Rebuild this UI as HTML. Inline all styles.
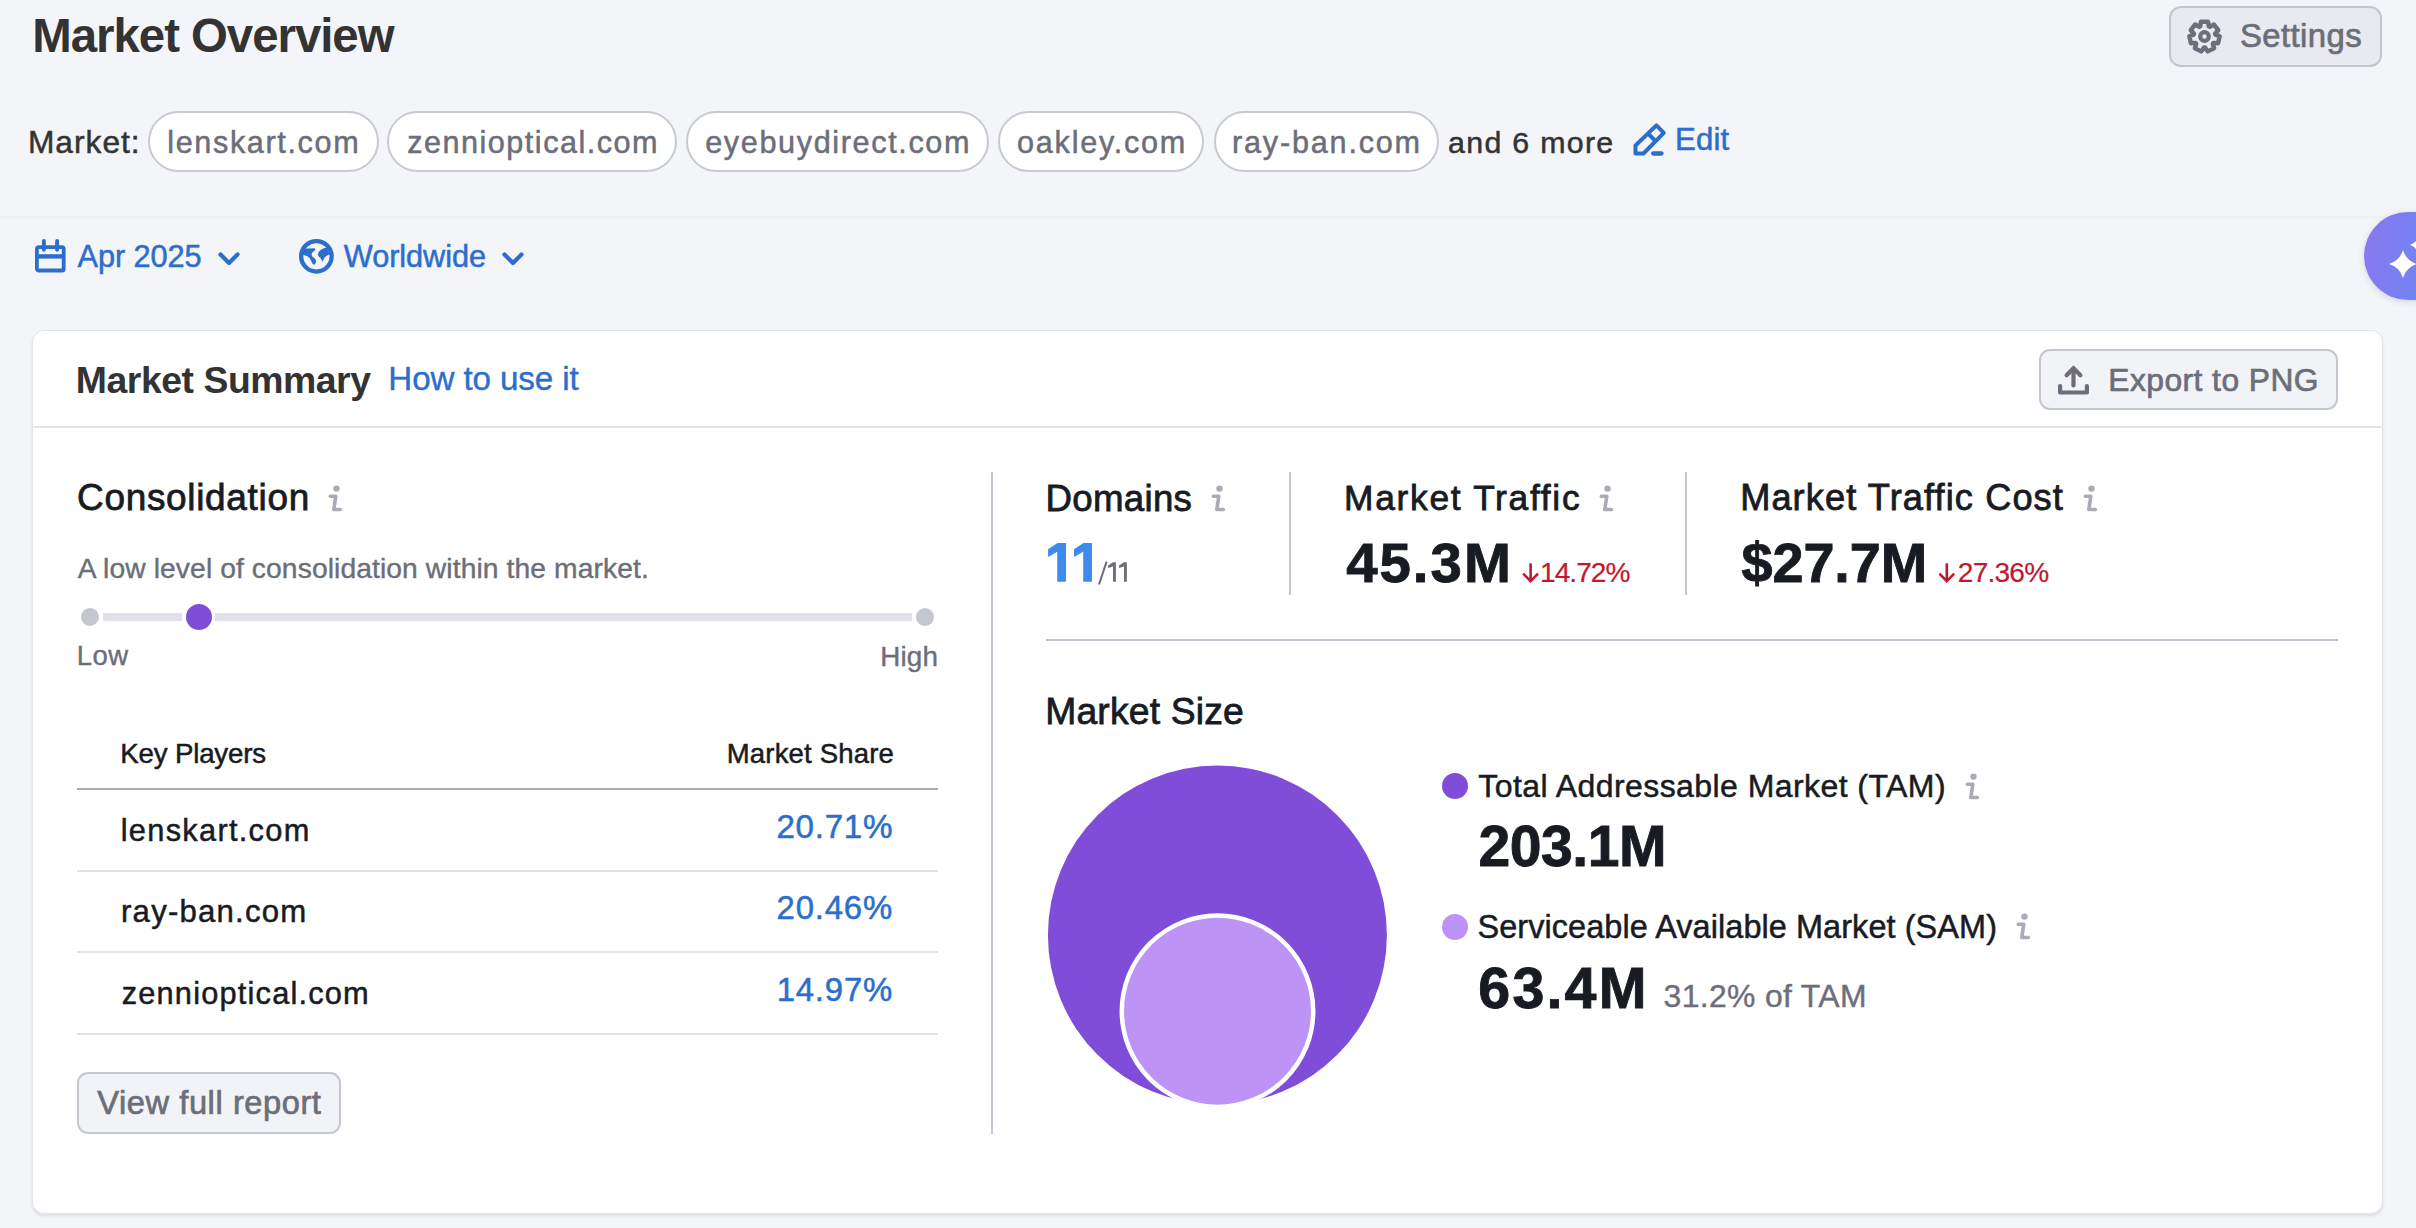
<!DOCTYPE html>
<html><head><meta charset="utf-8">
<style>
html,body{margin:0;padding:0}
body{width:2416px;height:1228px;overflow:hidden;position:relative;background:#f4f5f9;font-family:"Liberation Sans",sans-serif}
.a{position:absolute;box-sizing:border-box}
.t{position:absolute;line-height:0;white-space:nowrap;font-family:"Liberation Sans",sans-serif}
.chip{position:absolute;box-sizing:border-box;top:111px;height:61px;border:2px solid #c8cad2;border-radius:31px;background:#fff}
.btn{position:absolute;box-sizing:border-box;border:2px solid #c4c7cf;border-radius:12px;background:#f2f3f6}
.ln{position:absolute}
svg{position:absolute;overflow:visible}
@media (max-width:1600px){html{zoom:0.5}}
</style></head><body>
<!-- divider under header area -->
<div class="ln" style="left:0;top:216px;width:2416px;height:2px;background:#eef0f4"></div>

<!-- Settings button -->
<div class="btn" style="left:2169px;top:6px;width:213px;height:61px;background:#e9eaef;border-color:#c4c6cd"></div>
<svg style="left:2187px;top:19px" width="35" height="35" viewBox="-17.5 -17.5 35 35">
 <path d="M-4.28 -10.13 L-3.61 -14.76 L3.61 -14.76 L4.28 -10.13 L5.25 -9.67 L9.29 -12.03 L13.80 -6.38 L10.59 -2.97 L10.83 -1.92 L15.20 -0.24 L13.59 6.81 L8.92 6.43 L8.26 7.27 L9.66 11.73 L3.15 14.87 L0.54 10.99 L-0.54 10.99 L-3.15 14.87 L-9.66 11.73 L-8.26 7.27 L-8.92 6.43 L-13.59 6.81 L-15.20 -0.24 L-10.83 -1.92 L-10.59 -2.97 L-13.80 -6.38 L-9.29 -12.03 L-5.25 -9.67Z" fill="none" stroke="#6c6e79" stroke-width="4.4" stroke-linejoin="round"/>
 <circle cx="0" cy="0" r="4.3" fill="none" stroke="#6c6e79" stroke-width="4.2"/>
</svg>

<!-- chips -->
<div class="chip" style="left:148px;width:231px"></div>
<div class="chip" style="left:387px;width:290px"></div>
<div class="chip" style="left:686px;width:303px"></div>
<div class="chip" style="left:998px;width:206px"></div>
<div class="chip" style="left:1214px;width:225px"></div>

<!-- edit pencil -->
<svg style="left:1632px;top:123px" width="34" height="33" viewBox="0 0 34 33">
 <path d="M3.5 30.5 L3.5 22.5 L24.4 2.4 L31.8 9.8 L11.5 30.5 Z" fill="none" stroke="#2c6ecb" stroke-width="4" stroke-linejoin="round"/>
 <path d="M16 10.5 L23.6 18.1" stroke="#2c6ecb" stroke-width="4"/>
 <path d="M21.2 30.5 L29.5 30.5" stroke="#2c6ecb" stroke-width="4.3" stroke-linecap="round"/>
</svg>

<!-- calendar -->
<svg style="left:35px;top:239px" width="31" height="33" viewBox="0 0 31 33">
 <rect x="1.9" y="8.2" width="26.8" height="23.3" rx="1.6" fill="none" stroke="#2c6ecb" stroke-width="3.8"/>
 <rect x="2" y="15.2" width="27" height="4.4" fill="#2c6ecb"/>
 <path d="M8.9 1.9 L8.9 10.8 M22.1 1.9 L22.1 10.8" stroke="#2c6ecb" stroke-width="3.9" stroke-linecap="round"/>
</svg>
<svg style="left:218px;top:252px" width="22" height="14" viewBox="0 0 22 14">
 <path d="M2.5 2.5 L11 11 L19.5 2.5" fill="none" stroke="#2c6ecb" stroke-width="4.2" stroke-linecap="round" stroke-linejoin="round"/>
</svg>
<!-- globe -->
<svg style="left:294px;top:234px" width="46" height="46" viewBox="0 0 46 46">
 <circle cx="22.4" cy="22.3" r="15.25" fill="none" stroke="#2c6ecb" stroke-width="4.3"/>
 <path d="M8 14.8 L20.5 14.2 Q21.8 15 20.6 16.6 Q17 19 17.6 21 Q18 23 20.5 24.3 Q22.6 26 21.8 28.6 Q21 31 19.5 30.8 Q18 30 17 26.5 Q16 23.5 13 22 Q10 21 8 21 Z" fill="#2c6ecb"/>
 <path d="M33 13.3 Q29 14.3 26.5 16 Q23.5 18.5 24 21 Q24.5 23 26.5 24 Q27.5 25.5 28.3 27.8 Q29.5 26 30.5 23.5 Q32 21.5 36 20.3 Z" fill="#2c6ecb"/>
</svg>
<svg style="left:502px;top:252px" width="22" height="14" viewBox="0 0 22 14">
 <path d="M2.5 2.5 L11 11 L19.5 2.5" fill="none" stroke="#2c6ecb" stroke-width="4.2" stroke-linecap="round" stroke-linejoin="round"/>
</svg>

<!-- AI button -->
<div class="a" style="left:2364px;top:212px;width:120px;height:88px;border-radius:44px;background:linear-gradient(100deg,#8a78f0 0%,#6e86f2 60%,#5f8ff2 100%);box-shadow:0 2px 6px rgba(60,60,120,0.18)"></div>
<svg style="left:2387.6px;top:248.7px" width="30" height="30" viewBox="-15 -15 30 30">
 <path d="M0 -14 Q3.2 -3.2 14 0 Q3.2 3.2 0 14 Q-3.2 3.2 -14 0 Q-3.2 -3.2 0 -14Z" fill="#fff"/>
</svg>
<svg style="left:2410px;top:237px" width="16" height="16" viewBox="-8 -8 16 16">
 <path d="M0 -8 Q1.8 -1.8 8 0 Q1.8 1.8 0 8 Q-1.8 1.8 -8 0 Q-1.8 -1.8 0 -8Z" fill="#fff"/>
</svg>

<!-- card -->
<div class="a" style="left:32px;top:330px;width:2351px;height:884px;background:#fff;border:1px solid #e3e4ea;border-radius:12px;box-shadow:0 2px 3px rgba(25,27,35,0.10)"></div>
<div class="ln" style="left:33px;top:426px;width:2349px;height:2px;background:#e3e4ea"></div>

<!-- export button -->
<div class="btn" style="left:2039px;top:349px;width:299px;height:61px;border-radius:11px"></div>
<svg style="left:2058px;top:364px" width="31" height="31" viewBox="0 0 31 31">
 <path d="M15.5 21.5 L15.5 5" stroke="#6c6e79" stroke-width="4.2" stroke-linecap="round"/>
 <path d="M8.6 11.2 L15.5 4.3 L22.4 11.2" fill="none" stroke="#6c6e79" stroke-width="4.2" stroke-linecap="round" stroke-linejoin="miter"/>
 <path d="M2.1 22 L2.1 28.5 L28.9 28.5 L28.9 22" fill="none" stroke="#6c6e79" stroke-width="4.2" stroke-linecap="round" stroke-linejoin="round"/>
</svg>

<!-- consolidation slider -->
<div class="ln" style="left:103px;top:613px;width:79px;height:8px;background:#e0e1e9"></div>
<div class="ln" style="left:215px;top:613px;width:697px;height:8px;background:#e0e1e9"></div>
<div class="a" style="left:81px;top:608px;width:18px;height:18px;border-radius:9px;background:#c4c7cf"></div>
<div class="a" style="left:916px;top:608px;width:18px;height:18px;border-radius:9px;background:#c4c7cf"></div>
<div class="a" style="left:186px;top:604px;width:26px;height:26px;border-radius:13px;background:#804dd9"></div>

<!-- table lines -->
<div class="ln" style="left:77px;top:788px;width:861px;height:2px;background:#a9abb6"></div>
<div class="ln" style="left:77px;top:870px;width:861px;height:2px;background:#e0e1e9"></div>
<div class="ln" style="left:77px;top:951px;width:861px;height:2px;background:#e0e1e9"></div>
<div class="ln" style="left:77px;top:1033px;width:861px;height:2px;background:#e0e1e9"></div>

<!-- view full report -->
<div class="btn" style="left:77px;top:1072px;width:264px;height:62px;border-radius:11px"></div>

<!-- vertical dividers -->
<div class="ln" style="left:991px;top:472px;width:2px;height:662px;background:#c4c7cf"></div>
<div class="ln" style="left:1289px;top:472px;width:2px;height:123px;background:#c4c7cf"></div>
<div class="ln" style="left:1685px;top:472px;width:2px;height:123px;background:#c4c7cf"></div>
<div class="ln" style="left:1046px;top:639px;width:1292px;height:2px;background:#c4c7cf"></div>

<!-- circles -->
<svg style="left:0;top:0" width="2416" height="1228" viewBox="0 0 2416 1228">
 <circle cx="1217.4" cy="935" r="169.5" fill="#804dd9"/>
 <circle cx="1217.5" cy="1011.2" r="95.7" fill="#bd94f5" stroke="#fff" stroke-width="4.5"/>
 <circle cx="1455" cy="786" r="13" fill="#804dd9"/>
 <circle cx="1455" cy="927" r="13" fill="#bd94f5"/>
</svg>


<!-- red arrows -->
<svg style="left:1521.7px;top:562.3px" width="18" height="21" viewBox="0 0 18 21">
 <path d="M8.6 1.3 L8.6 18.6" stroke="#c4172f" stroke-width="2.6"/>
 <path d="M1.2 11.7 L8.6 19.1 L16 11.7" fill="none" stroke="#c4172f" stroke-width="2.6"/>
</svg>
<svg style="left:1937.8px;top:562.3px" width="18" height="21" viewBox="0 0 18 21">
 <path d="M8.8 1.3 L8.8 18.6" stroke="#c4172f" stroke-width="2.6"/>
 <path d="M1.4 11.7 L8.8 19.1 L16.2 11.7" fill="none" stroke="#c4172f" stroke-width="2.6"/>
</svg>
<!-- 11 / 11 -->
<svg style="left:0;top:0" width="2416" height="1228" viewBox="0 0 2416 1228">
 <path d="M1048.06 549.33 L1057.47 543.06 L1065.97 543.06 L1065.97 581.8 L1057.24 581.8 L1057.24 551.8 L1048.06 556.94 Z" fill="#3d8bef"/>
 <path d="M1074.03 549.33 L1083.44 543.06 L1091.94 543.06 L1091.94 581.8 L1083.21 581.8 L1083.21 551.8 L1074.03 556.94 Z" fill="#3d8bef"/>
 <path d="M1099 584.5 L1106.6 561.6" stroke="#6c6e79" stroke-width="2"/>
 <path d="M1108.07 565.45 L1113 562.3 L1115.9 562.3 L1115.9 581.8 L1113 581.8 L1113 566.6 L1108.07 567.9 Z" fill="#6c6e79"/>
 <path d="M1119.04 565.45 L1123.97 562.3 L1126.87 562.3 L1126.87 581.8 L1123.97 581.8 L1123.97 566.6 L1119.04 567.9 Z" fill="#6c6e79"/>
</svg>

<!-- info icons -->
<svg style="left:321.6px;top:479.8px" width="30" height="36" viewBox="0 0 30 36"><circle cx="14.5" cy="8.6" r="3.2" fill="#a9abb6"/><path d="M8.3 16.3 L13.8 16.3 L11.8 29.5 L18.4 29.5" fill="none" stroke="#a9abb6" stroke-width="3.6" stroke-linecap="round" stroke-linejoin="round"/></svg>
<svg style="left:1205.0px;top:480.0px" width="30" height="36" viewBox="0 0 30 36"><circle cx="14.5" cy="8.6" r="3.2" fill="#a9abb6"/><path d="M8.3 16.3 L13.8 16.3 L11.8 29.5 L18.4 29.5" fill="none" stroke="#a9abb6" stroke-width="3.6" stroke-linecap="round" stroke-linejoin="round"/></svg>
<svg style="left:1592.6px;top:480.3px" width="30" height="36" viewBox="0 0 30 36"><circle cx="14.5" cy="8.6" r="3.2" fill="#a9abb6"/><path d="M8.3 16.3 L13.8 16.3 L11.8 29.5 L18.4 29.5" fill="none" stroke="#a9abb6" stroke-width="3.6" stroke-linecap="round" stroke-linejoin="round"/></svg>
<svg style="left:2076.7px;top:480.0px" width="30" height="36" viewBox="0 0 30 36"><circle cx="14.5" cy="8.6" r="3.2" fill="#a9abb6"/><path d="M8.3 16.3 L13.8 16.3 L11.8 29.5 L18.4 29.5" fill="none" stroke="#a9abb6" stroke-width="3.6" stroke-linecap="round" stroke-linejoin="round"/></svg>
<svg style="left:1959.1px;top:767.9px" width="30" height="36" viewBox="0 0 30 36"><circle cx="14.5" cy="8.6" r="3.2" fill="#a9abb6"/><path d="M8.3 16.3 L13.8 16.3 L11.8 29.5 L18.4 29.5" fill="none" stroke="#a9abb6" stroke-width="3.6" stroke-linecap="round" stroke-linejoin="round"/></svg>
<svg style="left:2010.4px;top:908.2px" width="30" height="36" viewBox="0 0 30 36"><circle cx="14.5" cy="8.6" r="3.2" fill="#a9abb6"/><path d="M8.3 16.3 L13.8 16.3 L11.8 29.5 L18.4 29.5" fill="none" stroke="#a9abb6" stroke-width="3.6" stroke-linecap="round" stroke-linejoin="round"/></svg>

<div class="t" style="left:32.35px;top:35.8px;font-size:47.39px;letter-spacing:-1.027px;font-weight:700;color:#333333">Market Overview</div>
<div class="t" style="left:27.92px;top:141.75px;font-size:31.74px;letter-spacing:0.991px;font-weight:400;color:#333333;-webkit-text-stroke:0.5px #333333">Market:</div>
<div class="t" style="left:167.26px;top:141.75px;font-size:30.62px;letter-spacing:1.632px;font-weight:400;color:#6c6e79;-webkit-text-stroke:0.5px #6c6e79">lenskart.com</div>
<div class="t" style="left:407.16px;top:141.75px;font-size:30.62px;letter-spacing:1.496px;font-weight:400;color:#6c6e79;-webkit-text-stroke:0.5px #6c6e79">zennioptical.com</div>
<div class="t" style="left:705.19px;top:141.75px;font-size:30.62px;letter-spacing:1.628px;font-weight:400;color:#6c6e79;-webkit-text-stroke:0.5px #6c6e79">eyebuydirect.com</div>
<div class="t" style="left:1017.09px;top:141.75px;font-size:30.62px;letter-spacing:1.736px;font-weight:400;color:#6c6e79;-webkit-text-stroke:0.5px #6c6e79">oakley.com</div>
<div class="t" style="left:1232.06px;top:141.75px;font-size:30.62px;letter-spacing:1.795px;font-weight:400;color:#6c6e79;-webkit-text-stroke:0.5px #6c6e79">ray-ban.com</div>
<div class="t" style="left:1448.09px;top:142.55px;font-size:30.34px;letter-spacing:1.302px;font-weight:400;color:#333333;-webkit-text-stroke:0.5px #333333">and 6 more</div>
<div class="t" style="left:1674.97px;top:140.05px;font-size:31.16px;letter-spacing:0.177px;font-weight:400;color:#2c6ecb;-webkit-text-stroke:0.5px #2c6ecb">Edit</div>
<div class="t" style="left:77.56px;top:257.25px;font-size:30.72px;letter-spacing:-0.079px;font-weight:400;color:#2c6ecb;-webkit-text-stroke:0.5px #2c6ecb">Apr 2025</div>
<div class="t" style="left:343.84px;top:257.25px;font-size:30.72px;letter-spacing:-0.088px;font-weight:400;color:#2c6ecb;-webkit-text-stroke:0.5px #2c6ecb">Worldwide</div>
<div class="t" style="left:2239.91px;top:35.85px;font-size:32.9px;letter-spacing:0.427px;font-weight:400;color:#6c6e79;-webkit-text-stroke:0.7px #6c6e79">Settings</div>
<div class="t" style="left:75.87px;top:379.5px;font-size:37.39px;letter-spacing:-0.472px;font-weight:700;color:#333333">Market Summary</div>
<div class="t" style="left:388.29px;top:378.75px;font-size:33.19px;letter-spacing:-0.107px;font-weight:400;color:#2c6ecb;-webkit-text-stroke:0.4px #2c6ecb">How to use it</div>
<div class="t" style="left:2108.31px;top:379.75px;font-size:31.74px;letter-spacing:0.47px;font-weight:400;color:#6c6e79;-webkit-text-stroke:0.7px #6c6e79">Export to PNG</div>
<div class="t" style="left:77.11px;top:498.37px;font-size:36.96px;letter-spacing:0.679px;font-weight:400;color:#191b23;-webkit-text-stroke:0.8px #191b23">Consolidation</div>
<div class="t" style="left:77.81px;top:567.75px;font-size:28.26px;letter-spacing:0.089px;font-weight:400;color:#6c6e79;-webkit-text-stroke:0.4px #6c6e79">A low level of consolidation within the market.</div>
<div class="t" style="left:76.81px;top:656.45px;font-size:27.54px;letter-spacing:0.432px;font-weight:400;color:#6c6e79;-webkit-text-stroke:0.4px #6c6e79">Low</div>
<div class="t" style="left:880.2px;top:656.65px;font-size:27.83px;letter-spacing:0.167px;font-weight:400;color:#6c6e79;-webkit-text-stroke:0.4px #6c6e79">High</div>
<div class="t" style="left:120.35px;top:754.05px;font-size:27.68px;letter-spacing:-0.194px;font-weight:400;color:#191b23;-webkit-text-stroke:0.5px #191b23">Key Players</div>
<div class="t" style="left:726.75px;top:753.75px;font-size:27.54px;letter-spacing:0.169px;font-weight:400;color:#191b23;-webkit-text-stroke:0.5px #191b23">Market Share</div>
<div class="t" style="left:120.74px;top:830.85px;font-size:30.76px;letter-spacing:1.297px;font-weight:400;color:#191b23;-webkit-text-stroke:0.5px #191b23">lenskart.com</div>
<div class="t" style="left:121.04px;top:912.15px;font-size:31.17px;letter-spacing:1.202px;font-weight:400;color:#191b23;-webkit-text-stroke:0.5px #191b23">ray-ban.com</div>
<div class="t" style="left:121.65px;top:993.55px;font-size:30.76px;letter-spacing:1.203px;font-weight:400;color:#191b23;-webkit-text-stroke:0.5px #191b23">zennioptical.com</div>
<div class="t" style="left:776.38px;top:827.05px;font-size:33.19px;letter-spacing:0.719px;font-weight:400;color:#2c6ecb;-webkit-text-stroke:0.5px #2c6ecb">20.71%</div>
<div class="t" style="left:776.6px;top:907.85px;font-size:32.9px;letter-spacing:0.815px;font-weight:400;color:#2c6ecb;-webkit-text-stroke:0.5px #2c6ecb">20.46%</div>
<div class="t" style="left:776.63px;top:989.95px;font-size:32.9px;letter-spacing:0.809px;font-weight:400;color:#2c6ecb;-webkit-text-stroke:0.5px #2c6ecb">14.97%</div>
<div class="t" style="left:97.29px;top:1102.55px;font-size:32.61px;letter-spacing:0.571px;font-weight:400;color:#6c6e79;-webkit-text-stroke:0.7px #6c6e79">View full report</div>
<div class="t" style="left:1045.61px;top:498.57px;font-size:36.67px;letter-spacing:0.28px;font-weight:400;color:#191b23;-webkit-text-stroke:0.8px #191b23">Domains</div>
<div class="t" style="left:1344.04px;top:497.97px;font-size:35.36px;letter-spacing:1.693px;font-weight:400;color:#191b23;-webkit-text-stroke:0.8px #191b23">Market Traffic</div>
<div class="t" style="left:1740.14px;top:498.47px;font-size:36.23px;letter-spacing:1.083px;font-weight:400;color:#191b23;-webkit-text-stroke:0.8px #191b23">Market Traffic Cost</div>
<div class="t" style="left:1346.14px;top:563.01px;font-size:56.38px;letter-spacing:2.019px;font-weight:700;color:#191b23;-webkit-text-stroke:0.9px #191b23">45.3M</div>
<div class="t" style="left:1540.02px;top:572.8px;font-size:28.12px;letter-spacing:-0.965px;font-weight:400;color:#c4172f;-webkit-text-stroke:0.2px #c4172f">14.72%</div>
<div class="t" style="left:1741.61px;top:562.71px;font-size:55.8px;letter-spacing:-0.112px;font-weight:700;color:#191b23;-webkit-text-stroke:0.9px #191b23">$27.7M</div>
<div class="t" style="left:1957.83px;top:572.8px;font-size:28.12px;letter-spacing:-0.809px;font-weight:400;color:#c4172f;-webkit-text-stroke:0.2px #c4172f">27.36%</div>
<div class="t" style="left:1045.26px;top:710.77px;font-size:37.25px;letter-spacing:0.187px;font-weight:400;color:#191b23;-webkit-text-stroke:0.8px #191b23">Market Size</div>
<div class="t" style="left:1478.35px;top:785.75px;font-size:32.03px;letter-spacing:0.426px;font-weight:400;color:#191b23;-webkit-text-stroke:0.5px #191b23">Total Addressable Market (TAM)</div>
<div class="t" style="left:1478.47px;top:846.31px;font-size:57.1px;letter-spacing:-0.483px;font-weight:700;color:#191b23;-webkit-text-stroke:0.9px #191b23">203.1M</div>
<div class="t" style="left:1477.46px;top:926.75px;font-size:32.46px;letter-spacing:0.074px;font-weight:400;color:#191b23;-webkit-text-stroke:0.5px #191b23">Serviceable Available Market (SAM)</div>
<div class="t" style="left:1478.34px;top:987.51px;font-size:57.39px;letter-spacing:2.175px;font-weight:700;color:#191b23;-webkit-text-stroke:0.9px #191b23">63.4M</div>
<div class="t" style="left:1663.57px;top:995.55px;font-size:31.88px;letter-spacing:0.356px;font-weight:400;color:#6c6e79;-webkit-text-stroke:0.4px #6c6e79">31.2% of TAM</div>
</body></html>
